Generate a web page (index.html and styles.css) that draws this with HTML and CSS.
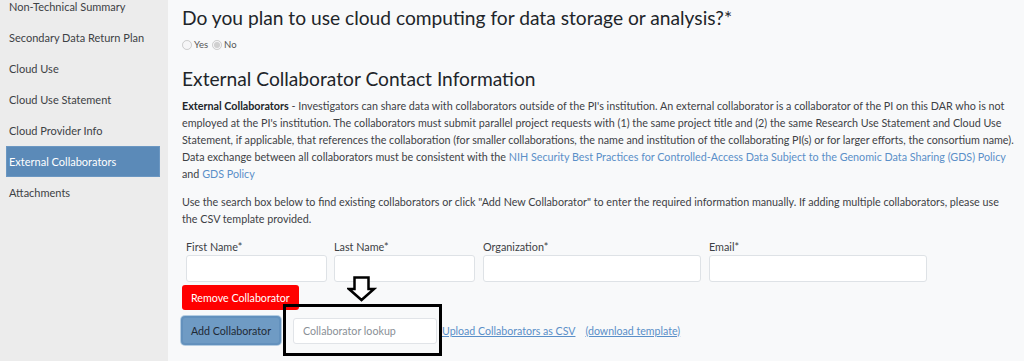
FILE: index.html
```html
<!DOCTYPE html>
<html lang="en">
<head>
  <meta charset="UTF-8" />
  <title>Data Access Request - External Collaborators</title>
  <link rel="stylesheet" href="styles.css">
</head>
<body>
  <nav class="sidebar">
    <a class="nav-item">Non-Technical Summary</a>
    <a class="nav-item">Secondary Data Return Plan</a>
    <a class="nav-item">Cloud Use</a>
    <a class="nav-item">Cloud Use Statement</a>
    <a class="nav-item">Cloud Provider Info</a>
    <a class="nav-item active">External Collaborators</a>
    <a class="nav-item">Attachments</a>
  </nav>

  <main class="content">
    <h2 class="question">Do you plan to use cloud computing for data storage or analysis?*</h2>
    <div class="radios">
      <label><input type="radio" name="cloud" disabled /> Yes</label>
      <label><input type="radio" name="cloud" checked disabled /> No</label>
    </div>

    <h2 class="section-title">External Collaborator Contact Information</h2>
    <p class="info">
      <strong>External Collaborators</strong> - Investigators can share data with collaborators outside of the PI's institution. An external collaborator is a collaborator of the PI on this DAR who is not employed at the PI's institution. The collaborators must submit parallel project requests with (1) the same project title and (2) the same Research Use Statement and Cloud Use Statement, if applicable, that references the collaboration (for smaller collaborations, the name and institution of the collaborating PI(s) or for larger efforts, the consortium name). Data exchange between all collaborators must be consistent with the <a href="#">NIH Security Best Practices for Controlled-Access Data Subject to the Genomic Data Sharing (GDS) Policy</a> and <a href="#">GDS Policy</a>
    </p>
    <p class="info">
      Use the search box below to find existing collaborators or click "Add New Collaborator" to enter the required information manually. If adding multiple collaborators, please use<br>the CSV template provided.
    </p>

    <div class="collab-row">
      <div class="field small">
        <label>First Name*</label>
        <input type="text" />
      </div>
      <div class="field small">
        <label>Last Name*</label>
        <input type="text" />
      </div>
      <div class="field wide">
        <label>Organization*</label>
        <input type="text" />
      </div>
      <div class="field wide">
        <label>Email*</label>
        <input type="text" />
      </div>
    </div>

    <button class="btn-remove">Remove Collaborator</button>

    <div class="actions">
      <button class="btn-add">Add Collaborator</button>
      <input class="lookup" type="text" placeholder="Collaborator lookup" />
      <a href="#" class="csv-link">Upload Collaborators as CSV</a>
      <a href="#" class="csv-link">(download template)</a>

      <!-- annotation overlay -->
      <svg class="arrow" width="30" height="26" viewBox="0 0 30 26">
        <polygon points="7.5,1.5 21.5,1.5 21.5,13 27,13 14.5,24 2,13 7.5,13" fill="#fff" stroke="#000" stroke-width="2.5" stroke-linejoin="miter" />
      </svg>
      <div class="highlight"></div>
    </div>
  </main>
</body>
</html>
```

FILE: styles.css
```css
* {
  box-sizing: border-box;
}
body {
  margin: 0;
  display: flex;
  font-family: 'Lato', 'Open Sans', sans-serif;
  color: #343a40;
  background: #f8f9fa;
  height: 361px;
  overflow: hidden;
}
/* Sidebar */
.sidebar {
  width: 168px;
  flex-shrink: 0;
  background: #ececec;
  padding: 0 8px 0 6px;
  margin-top: -9px;
  display: flex;
  flex-direction: column;
}
.nav-item {
  display: block;
  height: 31px;
  line-height: 31px;
  padding: 0 3px;
  font-size: 11px;
  color: #3d4145;
  white-space: nowrap;
}
.nav-item.active {
  background: #5b8ab8;
  color: #fff;
  border: 1px solid #6b97c2;
  line-height: 29px;
  padding: 0 2px;
}
/* Main content */
.content {
  flex: 1;
  padding: 5px 4px 0 14px;
  position: relative;
}
.question,
.section-title {
  margin: 0;
  font-weight: 400;
  font-size: 19.2px;
  line-height: 26px;
  color: #212529;
}
.radios {
  font-size: 9.5px;
  margin: 8px 0 16px;
  display: flex;
  gap: 4px;
  align-items: center;
  color: #555;
}
.radios label {
  display: flex;
  align-items: center;
  gap: 2px;
}
.radios input {
  margin: 0;
  width: 10px;
  height: 10px;
  accent-color: #888;
}
.section-title {
  margin-bottom: 5px;
}
.info {
  font-size: 10.75px;
  line-height: 17px;
  margin: 0 0 11px;
  color: #3d4145;
}
.info strong {
  color: #212529;
}
.info a,
.csv-link {
  color: #5a8fc8;
  text-decoration: none;
}
/* Collaborator fields */
.collab-row {
  display: flex;
  gap: 7px;
  margin: 13px 0 0 4px;
}
.field label {
  display: block;
  font-size: 10.8px;
  margin: 0 0 2px 0;
  color: #3d4145;
}
.field input {
  height: 27px;
  border: 1px solid #dee2e6;
  border-radius: 3px;
  background: #fff;
  width: 100%;
}
.field.small {
  width: 141px;
}
.field.wide {
  width: 218px;
  margin-left: 1px;
}
.btn-remove {
  margin-top: 3px;
  height: 25px;
  padding: 0 9px;
  background: #ff0000;
  color: #fff;
  border: none;
  border-radius: 3px;
  font-family: inherit;
  font-size: 10.7px;
}
.actions {
  position: relative;
  display: flex;
  align-items: center;
  margin-top: 6px;
  margin-left: -1px;
}
.btn-add {
  height: 29px;
  width: 100px;
  background: #6f9bc4;
  border: 2px solid #6391bd;
  box-shadow: 0 0 0 1px #b5cde2;
  border-radius: 4px;
  font-family: inherit;
  font-size: 10.7px;
  color: #1f2a35;
  white-space: nowrap;
  padding: 0;
}
.lookup {
  margin-left: 12px;
  width: 144px;
  height: 26px;
  border: 1px solid #e1e4e8;
  border-radius: 3px;
  padding: 0 9px;
  font-family: inherit;
  font-size: 10.7px;
  background: #fff;
}
.lookup::placeholder {
  color: #8a9096;
}
.csv-link {
  font-size: 10.6px;
  text-decoration: underline;
  margin-left: 5px;
}
.csv-link + .csv-link {
  margin-left: 10px;
}
/* Annotation overlay */
.arrow {
  position: absolute;
  left: 166px;
  top: -40px;
}
.highlight {
  position: absolute;
  left: 102px;
  top: -12px;
  width: 159px;
  height: 52px;
  border: 3px solid #000;
}
```
